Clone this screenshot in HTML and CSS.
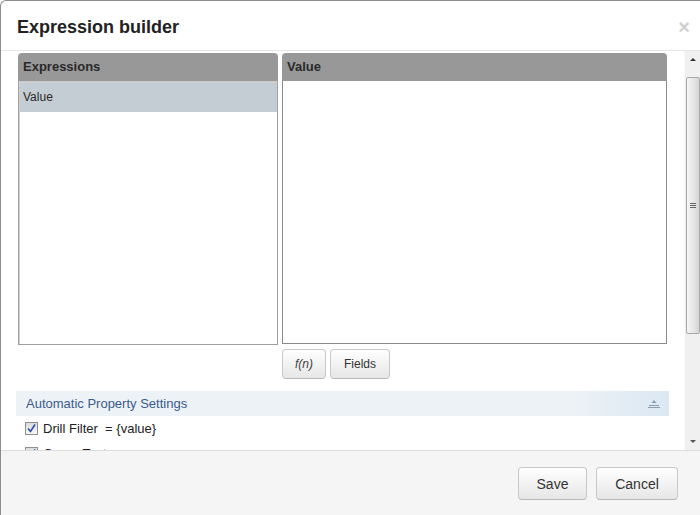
FILE: index.html
```html
<!DOCTYPE html>
<html>
<head>
<meta charset="utf-8">
<link rel="stylesheet" href="styles.css">
</head>
<body>
<div class="modal">
  <div class="modal-header">
    <h3 class="title">Expression builder</h3>
    <span class="close">×</span>
  </div>
  <div class="modal-body">
    <div class="content">
      <div class="panels">
        <div class="panel expr">
          <div class="panel-head">Expressions</div>
          <div class="panel-box listbox">
            <div class="row selected">Value</div>
          </div>
        </div>
        <div class="panel value">
          <div class="panel-head">Value</div>
          <div class="panel-box textbox"></div>
          <div class="btns">
            <button class="btn fn">f(n)</button>
            <button class="btn">Fields</button>
          </div>
        </div>
      </div>
      <div class="section-bar">
        <span>Automatic Property Settings</span>
        <svg class="collapse" width="12" height="10" viewBox="0 0 12 10">
          <path d="M6 1 L8.5 4 L3.5 4 Z" fill="#8a9bb0"/>
          <rect x="1" y="6" width="10" height="1" fill="#8a9bb0"/>
          <rect x="0" y="8" width="12" height="1" fill="#8a9bb0"/>
        </svg>
      </div>
      <label class="check-row">
        <span class="cb"><svg width="11" height="11" viewBox="0 0 11 11"><path d="M2 5.5 L4.5 8.5 L9 1.5" stroke="#2b4fa8" stroke-width="1.6" fill="none"/></svg></span>
        <span>Drill Filter&nbsp;&nbsp;= {value}</span>
      </label>
      <label class="check-row">
        <span class="cb"><svg width="11" height="11" viewBox="0 0 11 11"><path d="M2 5.5 L4.5 8.5 L9 1.5" stroke="#2b4fa8" stroke-width="1.6" fill="none"/></svg></span>
        <span>Group Text</span>
      </label>
    </div>
    <div class="scrollbar">
      <div class="arrow up"></div>
      <div class="track">
        <div class="thumb"><div class="grip"></div></div>
      </div>
      <div class="arrow down"></div>
    </div>
  </div>
  <div class="modal-footer">
    <button class="btn big">Save</button>
    <button class="btn big cancel">Cancel</button>
  </div>
</div>
</body>
</html>
```

FILE: styles.css
```css
* { box-sizing: border-box; }
html, body { margin: 0; padding: 0; background: #fff; }
body { font-family: "Liberation Sans", Arial, sans-serif; color: #333; }

.modal {
  width: 700px;
  height: 515px;
  display: flex;
  flex-direction: column;
  border-top: 1px solid #8c8c8c;
  border-left: 1px solid #8c8c8c;
  border-top-left-radius: 6px;
  overflow: hidden;
  background: #fff;
}

.modal-header {
  height: 50px;
  flex: none;
  border-bottom: 1px solid #e5e5e5;
  display: flex;
  align-items: center;
  justify-content: space-between;
  padding: 3px 10px 0 16px;
}
.title {
  margin: 0;
  font-size: 18px;
  font-weight: bold;
  color: #222;
}
.close {
  font-size: 20px;
  font-weight: bold;
  color: #d0d0d0;
  line-height: 20px;
}

.modal-body {
  flex: 1;
  display: flex;
  min-height: 0;
}
.content {
  flex: 1;
  overflow: hidden;
  padding: 2px 15px 0 15px;
}

.panels {
  display: flex;
  gap: 4px;
  padding: 0 2px;
}
.panel { display: flex; flex-direction: column; }
.expr { width: 260px; }
.value { width: 385px; }

.panel-head {
  height: 28px;
  background: #989898;
  border-radius: 4px 4px 0 0;
  font-size: 13px;
  font-weight: bold;
  color: #2a2a2a;
  padding: 6px 0 0 5px;
}
.panel-box {
  height: 264px;
  background: #fff;
}
.listbox {
  border: 1px solid #a0a0a0;
  border-top-color: #c8c8c8;
  box-shadow: inset 1px 1px 0 #d0d0d0;
  padding: 1px 0 0 1px;
}
.textbox {
  border: 1px solid #8a8a8a;
  border-top: none;
  height: 263px;
}
.row {
  height: 29px;
  font-size: 12px;
  color: #2a2a2a;
  padding: 7px 0 0 3px;
}
.row.selected { background: #c4cdd4; }

.btns {
  display: flex;
  gap: 4px;
  margin-top: 5px;
}
.btn {
  font-family: "Liberation Sans", Arial, sans-serif;
  font-size: 12px;
  color: #333;
  height: 30px;
  padding: 0 12px;
  border: 1px solid #c8c8c8;
  border-bottom-color: #b8b8b8;
  border-radius: 4px;
  background: linear-gradient(#ffffff, #e6e6e6);
}
.btn.fn { font-style: italic; width: 44px; padding: 0; color: #444; }
.btns .btn:nth-child(2) { width: 60px; padding: 0; }

.section-bar {
  margin-top: 12px;
  height: 25px;
  background: linear-gradient(to right, #edf2f6 0%, #edf2f6 85%, #dbe8f3 100%);
  display: flex;
  align-items: center;
  justify-content: space-between;
  padding: 0 9px 0 10px;
  font-size: 13px;
  color: #3b5a8e;
}
.collapse { margin-top: 1px; }

.check-row {
  display: flex;
  align-items: center;
  gap: 5px;
  font-size: 13px;
  color: #222;
  height: 25px;
  padding-left: 9px;
}
.cb {
  width: 13px;
  height: 13px;
  border: 1px solid #8f8f8f;
  background: linear-gradient(#dcdcdc, #f8f8f8);
  display: flex;
  align-items: center;
  justify-content: center;
}

.scrollbar {
  width: 16px;
  flex: none;
  background: #f0f0f0;
  border-left: 1px solid #f7f7f7;
  display: flex;
  flex-direction: column;
}
.arrow {
  height: 17px;
  position: relative;
}
.arrow::after {
  content: "";
  position: absolute;
  left: 5px;
  top: 7px;
  border-left: 3px solid transparent;
  border-right: 3px solid transparent;
}
.arrow.up::after { border-bottom: 3px solid #333; }
.arrow.down::after { border-top: 3px solid #555; top: 7px; }
.track {
  flex: 1;
  padding-top: 9px;
}
.thumb {
  height: 257px;
  margin: 0 0 0 1px;
  border: 1px solid #a8a8a8;
  border-radius: 2px;
  background: linear-gradient(to right, #f6f6f6, #e4e4e4 60%, #d4d4d4);
  display: flex;
  align-items: center;
  justify-content: center;
}
.grip {
  width: 6px;
  height: 6px;
  background: repeating-linear-gradient(#666 0 1px, transparent 1px 2px);
}

.modal-footer {
  height: 65px;
  flex: none;
  border-top: 1px solid #dcdcdc;
  background: #f5f5f5;
  display: flex;
  justify-content: flex-end;
  align-items: flex-start;
  gap: 9px;
  padding: 16px 22px 0 0;
}
.btn.big {
  font-size: 14px;
  height: 33px;
  width: 69px;
  padding: 0;
  color: #333;
}
.btn.big.cancel { width: 82px; }
```
